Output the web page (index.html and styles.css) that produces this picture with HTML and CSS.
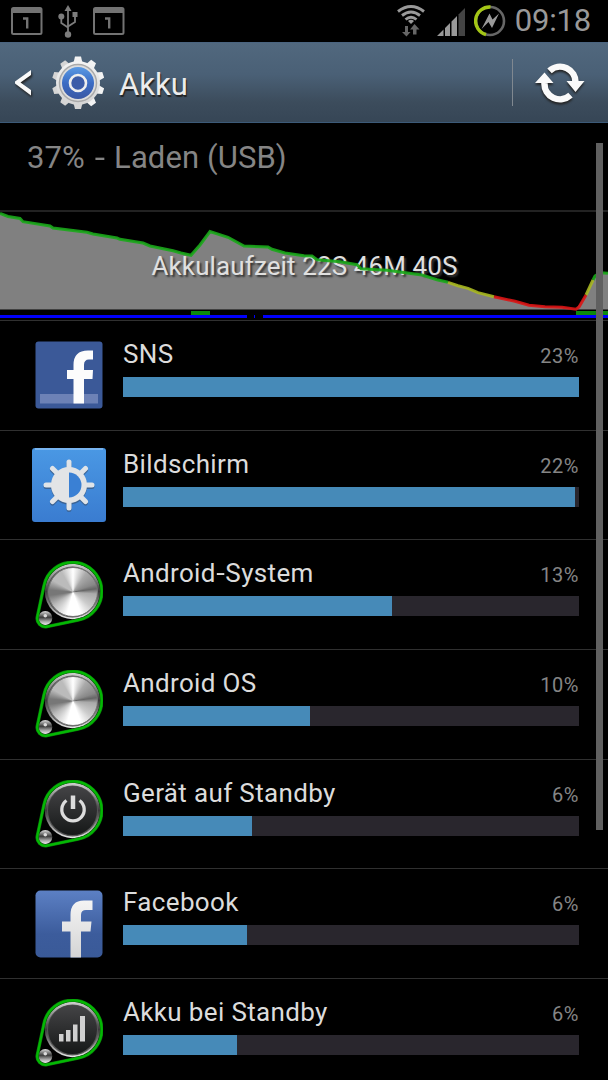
FILE: index.html
```html
<!DOCTYPE html>
<html lang="de">
<head>
    <meta charset="UTF-8">
    <meta name="viewport" content="width=device-width, initial-scale=1.0">
    <title>Akku</title>
    <link rel="stylesheet" href="styles.css">
</head>
<body>

    <!-- Shared shapes -->
    <svg class="defs" width="0" height="0">
        <defs>
            <linearGradient id="metal" x1="0" y1="0" x2="0" y2="1">
                <stop offset="0" stop-color="#ddd"/>
                <stop offset="0.45" stop-color="#3c3c3c"/>
                <stop offset="0.75" stop-color="#aaa"/>
                <stop offset="1" stop-color="#eee"/>
            </linearGradient>
            <linearGradient id="ring" x1="0" y1="0" x2="0" y2="1">
                <stop offset="0" stop-color="#d0d0d0"/>
                <stop offset="0.25" stop-color="#8c8c8c"/>
                <stop offset="0.5" stop-color="#3a3a3a"/>
                <stop offset="0.75" stop-color="#8c8c8c"/>
                <stop offset="1" stop-color="#e8e8e8"/>
            </linearGradient>
            <linearGradient id="dark" x1="0" y1="0" x2="0" y2="1">
                <stop offset="0" stop-color="#444446"/>
                <stop offset="1" stop-color="#161818"/>
            </linearGradient>
            <linearGradient id="silver" x1="0" y1="0" x2="0" y2="1">
                <stop offset="0" stop-color="#f4f4f4"/>
                <stop offset="1" stop-color="#d4d4d4"/>
            </linearGradient>
            <linearGradient id="blue" x1="0" y1="0" x2="0" y2="1">
                <stop offset="0" stop-color="#5a9ae4"/>
                <stop offset="0.5" stop-color="#3c6cc4"/>
                <stop offset="1" stop-color="#3a58a4"/>
            </linearGradient>
            <linearGradient id="display" x1="0" y1="0" x2="0" y2="1">
                <stop offset="0" stop-color="#4a98e4"/>
                <stop offset="1" stop-color="#3a7cd0"/>
            </linearGradient>
            <linearGradient id="facebook" x1="0" y1="0" x2="0" y2="1">
                <stop offset="0" stop-color="#5c80c4"/>
                <stop offset="0.65" stop-color="#3c5c9c"/>
                <stop offset="1" stop-color="#3a5a98"/>
            </linearGradient>
            <symbol id="pin" viewBox="0 0 68 68">
                <circle cx="37.500" cy="30.500" r="27.700" fill="url(#ring)"/>
                <circle cx="37.500" cy="31" r="25.500" fill="#555"/>
                <circle cx="10.300" cy="57" r="7" fill="url(#metal)"/>
                <circle cx="10.300" cy="54.800" r="1.800" fill="#ddd"/>
                <path d="M8.900 25A29.200 29.200 0 1 1 43 59.200L12 65.700A8.300 8.300 0 0 1 2.300 56Z" fill="none" stroke="#0a7a0a" stroke-width="3.400"/>
                <path d="M8.900 25A29.200 29.200 0 1 1 43 59.200L12 65.700A8.300 8.300 0 0 1 2.300 56Z" fill="none" stroke="#04b804" stroke-width="2.200"/>
            </symbol>
            <symbol id="calendar" viewBox="0 0 32 28">
                <rect x="1" y="1" width="29.500" height="26" rx="1.500" fill="none" stroke="#737373" stroke-width="2"/>
                <path d="M1 1H30.500V6H1Z" fill="#737373"/>
                <path d="M12 11.500H16.200V21.500" fill="none" stroke="#737373" stroke-width="2.400"/>
            </symbol>
        </defs>
    </svg>

    <div class="status-bar">
        <div class="notifications">
            <svg width="32" height="28"><use href="#calendar"/></svg>
            <svg class="usb" width="20" height="33" viewBox="0 0 20 33">
                <g fill="none" stroke="#7c7c7c" stroke-width="1.800">
                    <path d="M10 4V29M3.300 12V18L10 22.500M17 11V17L10 21.500"/>
                </g>
                <g fill="#7c7c7c">
                    <path d="M10 0L13.500 6H6.500Z"/>
                    <circle cx="3.300" cy="11.500" r="3"/>
                    <rect x="14.500" y="7" width="5" height="5"/>
                    <circle cx="10" cy="29.500" r="3.200"/>
                </g>
            </svg>
            <svg width="32" height="28"><use href="#calendar"/></svg>
        </div>
        <div class="system">
            <svg class="wifi" width="28" height="32" viewBox="0 0 28 32">
                <g fill="none" stroke="#999" stroke-width="2.900">
                    <path d="M1 6.500Q14 -3.500 27 6.500"/>
                    <path d="M5 10.500Q14 3.500 23 10.500"/>
                    <path d="M8.500 14.500Q14 10 19.500 14.500"/>
                </g>
                <path d="M11 16Q14 13.500 17 16L14 19Z" fill="#999"/>
                <path d="M8 21H11V27H13.500L9.500 31.500L5 27H8ZM16 29.500V24.500H13L17.500 19L22.500 24.500H19.500V29.500Z" fill="#666"/>
            </svg>
            <svg class="signal" width="29" height="28" viewBox="0 0 29 28">
                <path d="M0 28L6.500 21.500V28ZM8 28V20L13 15V28ZM14.500 28V13.500L20 8V28Z" fill="#999"/>
                <path d="M21.500 28V6.500L28 0V28Z" fill="#444"/>
            </svg>
            <svg class="charging" width="32" height="32" viewBox="0 0 32 32">
                <circle cx="16" cy="16" r="14" fill="none" stroke="#666" stroke-width="2.600"/>
                <path d="M16.500 2A14 14 0 0 0 12 29.500" fill="none" stroke="#a4c616" stroke-width="3.400"/>
                <path d="M15.500 8.500L18.500 14.500L25 8.500L18 23L14.500 17L7.500 24Z" fill="#999"/>
            </svg>
            <span class="clock">09:18</span>
        </div>
    </div>

    <header class="action-bar">
        <svg class="back" width="17" height="28" viewBox="0 0 17 28">
            <path d="M16 1V6L5.500 13.500L16 21V26.500L0 14.500V12.500Z" fill="#fafafa"/>
        </svg>
        <svg class="gear" width="52" height="54" viewBox="-26 -27 52 54">
            <g fill="url(#silver)">
                <path d="M-4.500 -20L-3 -26.500H3L4.500 -20V20L3 26H-3L-4.500 20Z"/>
                <path d="M-4.500 -20L-3 -26.500H3L4.500 -20V20L3 26H-3L-4.500 20Z" transform="rotate(36)"/>
                <path d="M-4.500 -20L-3 -26.500H3L4.500 -20V20L3 26H-3L-4.500 20Z" transform="rotate(72)"/>
                <path d="M-4.500 -20L-3 -26.500H3L4.500 -20V20L3 26H-3L-4.500 20Z" transform="rotate(108)"/>
                <path d="M-4.500 -20L-3 -26.500H3L4.500 -20V20L3 26H-3L-4.500 20Z" transform="rotate(144)"/>
                <circle r="22"/>
            </g>
            <circle r="18.500" fill="#ddd" stroke="#aaa" stroke-width="1.500"/>
            <circle r="16" fill="url(#blue)"/>
            <circle r="8" fill="#3c5ca8" stroke="#eee" stroke-width="2.600"/>
        </svg>
        <h1>Akku</h1>
        <button class="refresh" aria-label="Aktualisieren">
            <svg width="50" height="40" viewBox="0 0 50 40">
                <g fill="none" stroke="#fafafa" stroke-width="6.500">
                    <path d="M14.500 7.800A15.500 15.500 0 0 1 40.500 20"/>
                    <path d="M35.500 32.200A15.500 15.500 0 0 1 9.500 20"/>
                </g>
                <path d="M31.500 18H49.500L40.500 29ZM0 20L9.500 9.500L18.500 20Z" fill="#fafafa"/>
            </svg>
        </button>
    </header>

    <main>
        <p class="summary">37% <span class="dash">-</span> Laden (USB)</p>

        <!-- Battery history -->
        <svg class="history" width="608" height="108" viewBox="0 212 608 108">
            <path fill="#808080" d="M0 213.500L8 216.500L20 218.500L23 221.700L50 226L53 228L87 232.300L93 234L117 238L120 239.300L143 243L150 246L173 250.700L181 253L191 255.300L200 245L210 231.500L228 237.300L244 246L268 247L272 249.300L285 253L304 255.700L312 256L317 259.700L340 261.700L357 264.700L361 268.700L387 270.300L422 275L437 279.700L448 282.300L458 285.700L468 288.300L478 292.700L494 296.700L515 301.300L529 305.300L545 306.700L562 307.300L576 309.300L586 295L593 280L600 272.700L608 273.300V309.500H0Z"/>
            <text class="runtime" x="151.500" y="275" textLength="306">Akkulaufzeit 22S 46M 40S</text>
            <g class="level">
                <path stroke="#1aa81a" d="M0 213.500L8 216.500L20 218.500L23 221.700L50 226L53 228L87 232.300L93 234L117 238L120 239.300L143 243L150 246L173 250.700L181 253L191 255.300L200 245L210 231.500L228 237.300L244 246L268 247L272 249.300L285 253L304 255.700L312 256L317 259.700L340 261.700L357 264.700L361 268.700L387 270.300L422 275L437 279.700L448 282.300M593 280L595 276L600 272.700L608 273.300"/>
                <path stroke="#a8b820" d="M448 282.300L458 285.700L468 288.300L478 292.700L494 296.700M586 295L593 280"/>
                <path stroke="#dc1414" d="M494 296.700L515 301.300L529 305.300L545 306.700L562 307.300L576 309.300L579 307L586 295"/>
            </g>
            <g shape-rendering="crispEdges">
                <path fill="#0c8a0c" d="M191 311H210V315H191ZM576 311H608V315H576Z"/>
                <path fill="#0000fa" d="M0 315H247V318H0ZM254 315H255V318H254ZM263 315H608V318H263Z"/>
            </g>
        </svg>

        <ul class="usage">
            <li>
                <svg class="icon" width="68" height="68" viewBox="0 0 68 68">
                    <rect x="0.500" y="0.500" width="67" height="67" rx="3" fill="#3b5998"/>
                    <rect x="5" y="53" width="58" height="9.500" fill="#6d82b6"/>
                    <path d="M38.500 62.500V38H32V29H38.500V24Q38.500 9.500 53 9.500H58V18.500H54Q49 18.500 49 24V29H58L57.500 38H49V62.500Z" fill="#fcfcfc"/>
                </svg>
                <div class="details">
                    <div class="label"><span class="name">SNS</span><span class="percent">23%</span></div>
                    <div class="bar"><div class="fill" style="width: 100%"></div></div>
                </div>
            </li>
            <li>
                <svg class="icon" width="74" height="74" viewBox="0 0 74 74">
                    <rect width="74" height="74" rx="3" fill="url(#display)"/>
                    <path d="M3 1H71" stroke="#78b4f0" stroke-width="2"/>
                    <g transform="translate(37 38.500)" stroke="#3c6494" stroke-width="5" stroke-linecap="round">
                        <path d="M0 -23V23M-23 0H23M-16.500 -16.500L16.500 16.500M16.500 -16.500L-16.500 16.500"/>
                        <circle r="15.500" fill="#3c6494"/>
                    </g>
                    <g transform="translate(37 37)">
                        <path d="M0 -23V23M-23 0H23M-16.500 -16.500L16.500 16.500M16.500 -16.500L-16.500 16.500" stroke="#e0e4e8" stroke-width="5" stroke-linecap="round"/>
                        <circle r="18" fill="#e2e4e6"/>
                        <path d="M0 -12.500A12.500 12.500 0 0 1 0 12.500Z" fill="#3a80d4"/>
                    </g>
                </svg>
                <div class="details">
                    <div class="label"><span class="name">Bildschirm</span><span class="percent">22%</span></div>
                    <div class="bar"><div class="fill" style="width: 99.1%"></div></div>
                </div>
            </li>
            <li>
                <div class="icon knob">
                    <svg width="68" height="68"><use href="#pin"/></svg>
                    <div class="brushed"></div>
                </div>
                <div class="details">
                    <div class="label"><span class="name">Android<span class="dash">-</span>System</span><span class="percent">13%</span></div>
                    <div class="bar"><div class="fill" style="width: 59.1%"></div></div>
                </div>
            </li>
            <li>
                <div class="icon knob">
                    <svg width="68" height="68"><use href="#pin"/></svg>
                    <div class="brushed"></div>
                </div>
                <div class="details">
                    <div class="label"><span class="name">Android OS</span><span class="percent">10%</span></div>
                    <div class="bar"><div class="fill" style="width: 41.1%"></div></div>
                </div>
            </li>
            <li>
                <svg class="icon" width="68" height="68" viewBox="0 0 68 68">
                    <use href="#pin"/>
                    <circle cx="37.500" cy="30.500" r="24.500" fill="url(#dark)"/>
                    <path d="M31.500 20.500A11.200 11.200 0 1 0 44.500 20.500" fill="none" stroke="#ddd" stroke-width="3.300"/>
                    <path d="M38 15.500V29" stroke="#ddd" stroke-width="4.500"/>
                </svg>
                <div class="details">
                    <div class="label"><span class="name">Gerät auf Standby</span><span class="percent">6%</span></div>
                    <div class="bar"><div class="fill" style="width: 28.2%"></div></div>
                </div>
            </li>
            <li>
                <svg class="icon" width="68" height="68" viewBox="0 0 68 68">
                    <rect x="0.500" y="0.500" width="67" height="67" rx="5" fill="url(#facebook)"/>
                    <path d="M35.500 67.500V41.500H27V31.500H35.500V25Q35.500 10.500 49 10.500H57.500V20H51Q46 20 46 25V31.500H56.500L55.500 41.500H46V67.500Z" fill="url(#silver)"/>
                </svg>
                <div class="details">
                    <div class="label"><span class="name">Facebook</span><span class="percent">6%</span></div>
                    <div class="bar"><div class="fill" style="width: 27.1%"></div></div>
                </div>
            </li>
            <li>
                <svg class="icon" width="68" height="68" viewBox="0 0 68 68">
                    <use href="#pin"/>
                    <circle cx="37.500" cy="30.500" r="24.500" fill="url(#dark)"/>
                    <path d="M24 35H28.500V42.500H24ZM31 31H35.500V42.500H31ZM38 25.500H42.500V42.500H38ZM45 17H50V42.500H45Z" fill="#d0d0d0"/>
                </svg>
                <div class="details">
                    <div class="label"><span class="name">Akku bei Standby</span><span class="percent">6%</span></div>
                    <div class="bar"><div class="fill" style="width: 25.1%"></div></div>
                </div>
            </li>
        </ul>
    </main>

    <div class="scrollbar"></div>

</body>
</html>
```
FILE: styles.css
```css
* {
    box-sizing: border-box;
}

body {
    font-family: Roboto, sans-serif;
    background-color: #000;
    color: #dcdcdc;
    margin: 0;
    height: 1080px;
    overflow: hidden;
    position: relative;
}

svg {
    display: block;
    flex-shrink: 0;
}

.defs {
    position: absolute;
}

/* Status bar */
.status-bar {
    display: flex;
    justify-content: space-between;
    height: 42px;
    padding: 0 17px 0 11px;
}

.notifications,
.system {
    display: flex;
    align-items: center;
}

.notifications {
    gap: 15px;
}

.system {
    align-items: flex-start;
}

.wifi {
    margin: 5px 12px 0 0;
}

.signal {
    margin: 8px 8px 0 0;
}

.charging {
    margin: 5px 9px 0 0;
}

.clock {
    font-size: 31px;
    line-height: 42px;
    letter-spacing: -0.2px;
    color: #999;
}

/* Title bar */
.action-bar {
    display: flex;
    align-items: center;
    height: 81px;
    padding-left: 15px;
    background: linear-gradient(#51687e, #4a6076 40%, #3c4c5c 75%, #364656);
    border-top: 1px solid #4a6480;
    border-bottom: 1px solid #3c5a78;
}

.back {
    margin-right: 20px;
    filter: drop-shadow(1px 2px 1px #222);
}

.gear {
    margin-right: 15px;
}

h1 {
    margin: 4px 0 0;
    font-size: 31px;
    font-weight: normal;
    color: #ececec;
    text-shadow: 1px 2px 1px #222;
}

.refresh {
    display: flex;
    align-items: center;
    height: 47px;
    margin: 0 0 0 auto;
    padding: 0 23px 0 22px;
    background: none;
    border: none;
    border-left: 1px solid #808890;
}

.refresh svg {
    filter: drop-shadow(0 2px 1px #222);
}

/* Charge state */
.summary {
    margin: 0;
    height: 89px;
    padding: 17px 28px 0 27px;
    font-size: 31px;
    line-height: 36px;
    letter-spacing: 0.1px;
    color: #858585;
    border-bottom: 2px solid #222;
}

.dash {
    display: inline-block;
    padding: 0 1px;
    transform: scaleX(1.2);
}

.summary .dash {
    padding: 0 2.5px;
}

.runtime {
    font-size: 26px;
    fill: #e0e0e0;
    text-shadow: 2px 2px 2px #333;
}

.level path {
    fill: none;
    stroke-width: 3;
    stroke-opacity: 0.9;
}

/* Consumers */
.usage {
    list-style: none;
    margin: 0;
    padding: 0;
}

.usage li {
    display: grid;
    grid-template-columns: 74px 1fr;
    column-gap: 17px;
    height: 109.7px;
    padding: 0 29px 0 32px;
    border-top: 1.5px solid #303030;
}

.icon {
    place-self: center;
}

.knob {
    display: grid;
}

.knob > * {
    grid-area: 1 / 1;
}

.brushed {
    width: 50px;
    height: 50px;
    margin: 6px 0 0 13px;
    border: 1px solid #777;
    border-radius: 50%;
    background: conic-gradient(#fff 0deg, #aaa 35deg, #888 70deg, #666 82deg, #aaa 95deg, #ccc 130deg, #fff 160deg, #fff 195deg, #bbb 235deg, #777 262deg, #777 275deg, #bbb 300deg, #bbb 330deg, #fff 360deg);
}

.details {
    padding-top: 18px;
}

.label {
    display: flex;
    justify-content: space-between;
    align-items: baseline;
    height: 30px;
    margin-bottom: 8px;
    line-height: 30px;
}

.name {
    font-size: 26px;
    letter-spacing: 0.35px;
}

.percent {
    font-size: 20px;
    letter-spacing: 0.5px;
    color: #858585;
}

.bar {
    height: 20px;
    background-color: #29262d;
}

.fill {
    height: 100%;
    background-color: #468ab8;
}

.scrollbar {
    position: absolute;
    top: 143px;
    right: 5px;
    width: 7px;
    height: 687px;
    background-color: #606060;
}
```
